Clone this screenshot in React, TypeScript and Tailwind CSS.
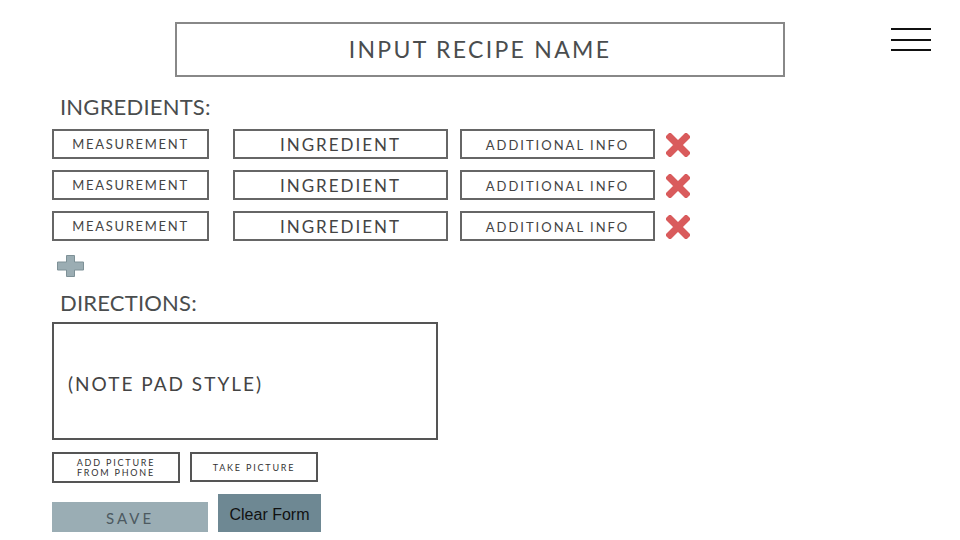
const gill = { fontFamily: "Lato, 'Open Sans', sans-serif" };

function RemoveIcon() {
  return (
    <svg width="24" height="24" viewBox="0 0 24 24" className="shrink-0">
      <path
        d="M4 4 L20 20 M20 4 L4 20"
        stroke="#d95b5c"
        strokeWidth="7"
        strokeLinecap="square"
      />
    </svg>
  );
}

function PlusIcon() {
  return (
    <svg width="27" height="22" viewBox="0 0 27 22">
      <path
        d="M9.5 0.5 H17.5 V7 H26.5 V15 H17.5 V21.5 H9.5 V15 H0.5 V7 H9.5 Z"
        fill="#9badb3"
        stroke="#7e9197"
        strokeWidth="1"
      />
    </svg>
  );
}

function IngredientRow() {
  return (
    <div className="flex items-center">
      <div className="flex h-[30px] w-[157px] items-center justify-center border-2 border-[#666] pt-[2px] text-[13px] tracking-[1.7px] text-[#444]">
        MEASUREMENT
      </div>
      <div className="ml-[24px] flex h-[30px] w-[215px] items-start justify-center border-2 border-[#666] pt-[1px] text-[17px] tracking-[2px] text-[#444]">
        INGREDIENT
      </div>
      <div className="ml-[12px] flex h-[30px] w-[195px] items-center justify-center border-2 border-[#666] pt-[3px] text-[13px] tracking-[2px] text-[#444]">
        ADDITIONAL INFO
      </div>
      <div className="ml-[11px] mt-[2px]">
        <RemoveIcon />
      </div>
    </div>
  );
}

export default function App() {
  return (
    <div className="h-[540px] w-[960px] overflow-hidden bg-white" style={gill}>
      <div className="flex items-start pt-[22px]">
        <div className="ml-[175px] flex h-[55px] w-[610px] items-center justify-center border-2 border-[#888] text-[23px] tracking-[2.3px] text-[#4a4d4e]">
          INPUT RECIPE NAME
        </div>
        <div className="ml-[106px] mt-[6px] flex w-[40px] flex-col gap-[8.5px]">
          <div className="h-[2px] bg-[#111]" />
          <div className="h-[2px] bg-[#111]" />
          <div className="h-[2px] bg-[#111]" />
        </div>
      </div>

      <div className="flex flex-col pl-[52px]">
        <h2 className="ml-[8px] mt-[16px] text-[22px] leading-[28px] tracking-[0.2px] text-[#4a4d4e]">
          INGREDIENTS:
        </h2>
        <div className="mt-[8px] flex flex-col gap-[11px]">
          <IngredientRow />
          <IngredientRow />
          <IngredientRow />
        </div>
        <div className="ml-[5px] mt-[14px]">
          <PlusIcon />
        </div>
        <h2 className="ml-[8px] mt-[12px] text-[22px] leading-[28px] tracking-[0.2px] text-[#4a4d4e]">
          DIRECTIONS:
        </h2>
        <div className="mt-[5px] flex h-[118px] w-[386px] items-center border-2 border-[#555] pl-[14px] pt-[6px] text-[19px] tracking-[2px] text-[#444]">
          (NOTE PAD STYLE)
        </div>
        <div className="mt-[12px] flex gap-[10px]">
          <div className="flex h-[31px] w-[128px] flex-col items-center justify-center border-2 border-[#555] text-[9px] leading-[10px] tracking-[1.8px] text-[#333]">
            <span>ADD PICTURE</span>
            <span>FROM PHONE</span>
          </div>
          <div className="flex h-[30px] w-[128px] items-center justify-center border-2 border-[#555] pt-[1px] text-[9px] tracking-[1.8px] text-[#333]">
            TAKE PICTURE
          </div>
        </div>
        <div className="mt-[11px] flex items-end gap-[10px]">
          <button className="h-[30px] w-[156px] bg-[#9aadb4] pt-[2px] text-[15px] tracking-[3px] text-[#4d5a61]">
            SAVE
          </button>
          <button
            className="flex h-[38px] w-[103px] items-start justify-center bg-[#6e8893] pt-[9px] text-[16px] text-[#111]"
            style={{ fontFamily: "'Liberation Sans', Arial, sans-serif" }}
          >
            Clear Form
          </button>
        </div>
      </div>
    </div>
  );
}
